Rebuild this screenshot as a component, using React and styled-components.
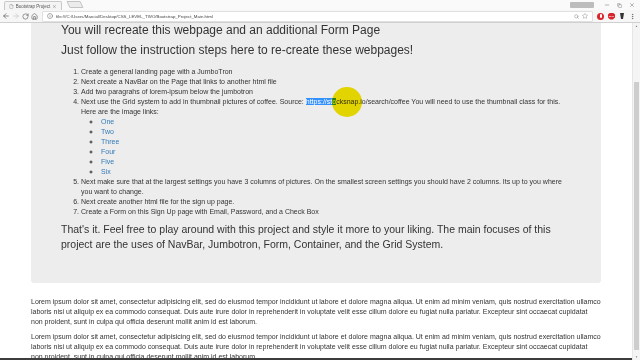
import React from "react"
import styled, { createGlobalStyle } from "styled-components"
import {
  ArrowLeft,
  ArrowRight,
  RotateCw,
  House,
  Info,
  Search,
  Star,
  EllipsisVertical,
  File,
  X,
  Minus,
  Copy,
} from "lucide-react"

const steps = [
  "Create a general landing page with a JumboTron",
  "Next create a NavBar on the Page that links to another html file",
  "Add two paragrahs of lorem-ipsum below the jumbotron",
]
const imageLinks = ["One", "Two", "Three", "Four", "Five", "Six"]
const lorem =
  "Lorem ipsum dolor sit amet, consectetur adipisicing elit, sed do eiusmod tempor incididunt ut labore et dolore magna aliqua. Ut enim ad minim veniam, quis nostrud exercitation ullamco laboris nisi ut aliquip ex ea commodo consequat. Duis aute irure dolor in reprehenderit in voluptate velit esse cillum dolore eu fugiat nulla pariatur. Excepteur sint occaecat cupidatat non proident, sunt in culpa qui officia deserunt mollit anim id est laborum."

const App = () => {
  return (
    <Window>
      <GlobalStyle />
      <TabStrip>
        <Tab>
          <File size={5} strokeWidth={1.5} />
          <TabTitle>Bootstrap Project</TabTitle>
          <X size={5} strokeWidth={2} />
        </Tab>
        <NewTab />
        <Profile />
        <WinControls>
          <Minus size={6} strokeWidth={1.5} />
          <Copy size={5} strokeWidth={1.5} />
          <X size={6} strokeWidth={1.5} />
        </WinControls>
      </TabStrip>
      <Toolbar>
        <NavIcons>
          <ArrowLeft size={8} strokeWidth={2} />
          <ArrowRight size={8} strokeWidth={2} color="#c4c4c4" />
          <RotateCw size={7} strokeWidth={2} />
          <House size={7} strokeWidth={2} />
        </NavIcons>
        <Omnibox>
          <Info size={6} strokeWidth={2} color="#666" />
          <Url>file:///C:/Users/Marcial/Desktop/CSS_LEVEL_TWO/Bootstrap_Project_Main.html</Url>
          <Search size={5} strokeWidth={2} color="#777" />
          <Star size={6} strokeWidth={1.5} color="#777" />
        </Omnibox>
        <Extensions>
          <ExtBadge $bg="#d9262c">
            <Dot />
          </ExtBadge>
          <ExtStop>
            <span>STOP</span>
          </ExtStop>
          <svg width="6" height="8" viewBox="0 0 6 8">
            <path d="M1 1 L5 1 L4 7 L2 7 Z" fill="#333" />
          </svg>
          <EllipsisVertical size={7} strokeWidth={2} color="#555" />
        </Extensions>
      </Toolbar>
      <Viewport>
        <Page>
          <Container>
            <Jumbotron>
              <Heading>You will recreate this webpage and an additional Form Page</Heading>
              <Heading>Just follow the instruction steps here to re-create these webpages!</Heading>
              <Steps>
                {steps.map((s) => (
                  <li key={s}>{s}</li>
                ))}
                <li>
                  Next use the Grid system to add in thumbnail pictures of coffee. Source:{" "}
                  <Selected>https://sto</Selected>cksnap.io/search/coffee You will need to use the
                  thumbnail class for this.
                  <br />
                  Here are the image links:
                  <Links>
                    {imageLinks.map((l) => (
                      <li key={l}>
                        <A href="#">{l}</A>
                      </li>
                    ))}
                  </Links>
                </li>
                <li>
                  Next make sure that at the largest settings you have 3 columns of pictures. On the
                  smallest screen settings you should have 2 columns. Its up to you where you want to
                  change.
                </li>
                <li>Next create another html file for the sign up page.</li>
                <li>Create a Form on this Sign Up page with Email, Password, and a Check Box</li>
              </Steps>
              <Lead>
                That's it. Feel free to play around with this project and style it more to your
                liking. The main focuses of this project are the uses of NavBar, Jumbotron, Form,
                Container, and the Grid System.
              </Lead>
            </Jumbotron>
            <Body>{lorem}</Body>
            <Body>{lorem}</Body>
          </Container>
          <CursorHalo />
        </Page>
        <Scrollbar>
          <Arrow>▲</Arrow>
          <Thumb />
          <Arrow>▼</Arrow>
        </Scrollbar>
      </Viewport>
    </Window>
  )
}

const GlobalStyle = createGlobalStyle`
  html, body {
    margin: 0;
    padding: 0;
  }
  body {
    width: 640px;
    height: 360px;
    overflow: hidden;
    background: #fff;
    color: #333;
    font-family: "Liberation Sans", Arial, sans-serif;
  }
`

const Window = styled.div`
  width: 640px;
  height: 360px;
  display: flex;
  flex-direction: column;
  background: #fff;
`

const TabStrip = styled.div`
  height: 10px;
  display: flex;
  align-items: flex-end;
  padding-left: 4px;
  background: #fafafa;
`

const Tab = styled.div`
  width: 58px;
  height: 9px;
  box-sizing: border-box;
  display: flex;
  align-items: center;
  gap: 2px;
  padding: 0 4px;
  background: #f4f4f4;
  border: 1px solid #c9c9c9;
  border-bottom: none;
  border-radius: 2px 2px 0 0;
  color: #666;
`

const TabTitle = styled.span`
  flex: 1;
  font-size: 4.5px;
  color: #555;
  white-space: nowrap;
`

const NewTab = styled.div`
  width: 12px;
  height: 5px;
  margin: 0 0 2px 6px;
  border: 1px solid #c3c3c3;
  border-radius: 1px;
  transform: skewX(25deg);
  background: #ececec;
`

const Profile = styled.div`
  margin: 0 10px 0 auto;
  align-self: center;
  width: 24px;
  height: 6px;
  background: #bdbdbd;
  border-radius: 1px;
`

const WinControls = styled.div`
  display: flex;
  align-items: center;
  align-self: center;
  gap: 7px;
  padding-right: 5px;
  color: #444;
`

const Toolbar = styled.div`
  height: 12px;
  display: flex;
  align-items: center;
  background: #f6f6f6;
  border-bottom: 1px solid #d0d0d0;
  padding: 0 4px 0 2px;
`

const NavIcons = styled.div`
  display: flex;
  align-items: center;
  gap: 2px;
  color: #555;
`

const Omnibox = styled.div`
  flex: 1;
  height: 9px;
  margin: 0 4px 0 4px;
  display: flex;
  align-items: center;
  gap: 3px;
  padding: 0 4px;
  background: #fff;
  border: 1px solid #e0e0e0;
  border-radius: 1px;
`

const Url = styled.span`
  flex: 1;
  font-size: 4.4px;
  color: #444;
  white-space: nowrap;
`

const Extensions = styled.div`
  display: flex;
  align-items: center;
  gap: 4px;
`

const ExtBadge = styled.div`
  width: 7px;
  height: 7px;
  border-radius: 50%;
  background: ${(p) => p.$bg};
  display: flex;
  align-items: center;
  justify-content: center;
`

const Dot = styled.div`
  width: 2px;
  height: 4px;
  background: #fff;
  border-radius: 1px;
`

const ExtStop = styled.div`
  width: 7px;
  height: 7px;
  background: #d9262c;
  clip-path: polygon(30% 0, 70% 0, 100% 30%, 100% 70%, 70% 100%, 30% 100%, 0 70%, 0 30%);
  display: flex;
  align-items: center;
  justify-content: center;
  span {
    font-size: 2px;
    color: #fff;
    font-weight: 700;
  }
`

const Viewport = styled.div`
  flex: 1;
  display: flex;
  min-height: 0;
`

const Page = styled.div`
  position: relative;
  flex: 1;
  overflow: hidden;
  border-bottom: 2px solid #3d3d3d;
`

/* the page is scrolled down a little */
const Container = styled.div`
  width: 570px;
  margin: -25px auto 0;
`

const Jumbotron = styled.div`
  background: #ededed;
  padding: 26px 30px 23px;
  border-radius: 3px;
  margin-bottom: 14px;
`

const Heading = styled.h3`
  margin: 0 0 7px;
  font-size: 12px;
  font-weight: 400;
  line-height: 1.1;
  color: #333;
`

const Steps = styled.ol`
  margin: 10px 0 5px;
  padding-left: 20px;
  font-size: 7px;
  line-height: 10px;
`

const Links = styled.ul`
  margin: 0;
  padding-left: 20px;
  list-style: circle;
`

const A = styled.a`
  color: #337ab7;
  text-decoration: none;
`

const Selected = styled.span`
  background: #3390ff;
  color: #fff;
`

const Lead = styled.p`
  margin: 0 0 8px;
  font-size: 10.5px;
  line-height: 15px;
  color: #333;
`

const Body = styled.p`
  margin: 0 0 5px;
  font-size: 7px;
  line-height: 10px;
`

const CursorHalo = styled.div`
  position: absolute;
  left: 332px;
  top: 64px;
  width: 30px;
  height: 30px;
  border-radius: 50%;
  background: #f4e400;
  mix-blend-mode: multiply;
  pointer-events: none;
`

const Scrollbar = styled.div`
  width: 7px;
  display: flex;
  flex-direction: column;
  background: #f4f4f4;
  border-left: 1px solid #e6e6e6;
`

const Arrow = styled.div`
  height: 6px;
  font-size: 3px;
  line-height: 6px;
  text-align: center;
  color: #8a8a8a;
`

const Thumb = styled.div`
  margin: 53px 1px 4px;
  flex: 1;
  background: #cdcdcd;
`

export default App
